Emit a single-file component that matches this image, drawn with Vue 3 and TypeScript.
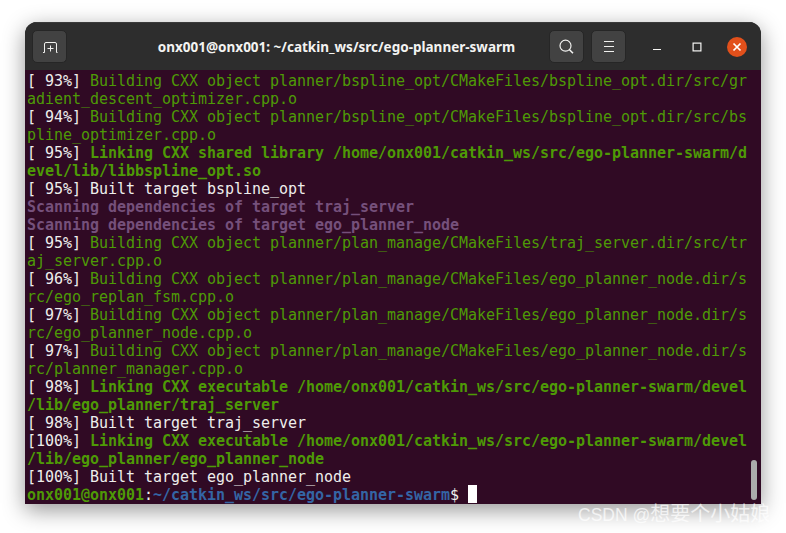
<script setup lang="ts">
type Seg = { t: string; c: string };
const W = 'w', G = 'g', B = 'gb', P = 'p', U = 'u';
const prefix = (p: string, rest: string, c: string): Seg[] => [{ t: p + ' ', c: W }, { t: rest, c }];
const lines: Seg[][] = [
  prefix('[ 93%]', 'Building CXX object planner/bspline_opt/CMakeFiles/bspline_opt.dir/src/gr', G),
  [{ t: 'adient_descent_optimizer.cpp.o', c: G }],
  prefix('[ 94%]', 'Building CXX object planner/bspline_opt/CMakeFiles/bspline_opt.dir/src/bs', G),
  [{ t: 'pline_optimizer.cpp.o', c: G }],
  prefix('[ 95%]', 'Linking CXX shared library /home/onx001/catkin_ws/src/ego-planner-swarm/d', B),
  [{ t: 'evel/lib/libbspline_opt.so', c: B }],
  [{ t: '[ 95%] Built target bspline_opt', c: W }],
  [{ t: 'Scanning dependencies of target traj_server', c: P }],
  [{ t: 'Scanning dependencies of target ego_planner_node', c: P }],
  prefix('[ 95%]', 'Building CXX object planner/plan_manage/CMakeFiles/traj_server.dir/src/tr', G),
  [{ t: 'aj_server.cpp.o', c: G }],
  prefix('[ 96%]', 'Building CXX object planner/plan_manage/CMakeFiles/ego_planner_node.dir/s', G),
  [{ t: 'rc/ego_replan_fsm.cpp.o', c: G }],
  prefix('[ 97%]', 'Building CXX object planner/plan_manage/CMakeFiles/ego_planner_node.dir/s', G),
  [{ t: 'rc/ego_planner_node.cpp.o', c: G }],
  prefix('[ 97%]', 'Building CXX object planner/plan_manage/CMakeFiles/ego_planner_node.dir/s', G),
  [{ t: 'rc/planner_manager.cpp.o', c: G }],
  prefix('[ 98%]', 'Linking CXX executable /home/onx001/catkin_ws/src/ego-planner-swarm/devel', B),
  [{ t: '/lib/ego_planner/traj_server', c: B }],
  [{ t: '[ 98%] Built target traj_server', c: W }],
  prefix('[100%]', 'Linking CXX executable /home/onx001/catkin_ws/src/ego-planner-swarm/devel', B),
  [{ t: '/lib/ego_planner/ego_planner_node', c: B }],
  [{ t: '[100%] Built target ego_planner_node', c: W }],
];
const prompt: Seg[] = [
  { t: 'onx001@onx001', c: B },
  { t: ':', c: W },
  { t: '~/catkin_ws/src/ego-planner-swarm', c: U },
  { t: '$ ', c: W },
];
</script>

<template>
  <div class="page">
    <div class="window">
      <header class="bar">
        <button class="btn">
          <svg width="16" height="16" viewBox="0 0 16 16" fill="none" stroke="#f0f0ee" stroke-width="1">
            <path d="M1 13.500h1.500V5a1.500 1.500 0 0 1 1.500-1.500h9a1.500 1.500 0 0 1 1.500 1.500v8.500h1" />
            <path d="M8.500 6.500v6M5.500 9.500h6" />
          </svg>
        </button>
        <div class="title">onx001@onx001: ~/catkin_ws/src/ego-planner-swarm</div>
        <div class="tools">
          <button class="btn">
            <svg width="16" height="16" viewBox="0 0 16 16" fill="none" stroke="#f0f0ee" stroke-width="1.200">
              <circle cx="6.500" cy="6.700" r="5.500" />
              <path d="M10.500 10.800l3.500 3.400" stroke-width="1.600" />
            </svg>
          </button>
          <button class="btn">
            <svg width="16" height="16" viewBox="0 0 16 16" fill="none" stroke="#f0f0ee" stroke-width="1">
              <path d="M3 2.500h10M3 7.500h10M3 12.500h10" />
            </svg>
          </button>
        </div>
        <div class="controls">
          <span class="ctl">
            <svg width="12" height="12" viewBox="0 0 12 12" fill="none" stroke="#f6f6f4" stroke-width="1"><path d="M2 8.500h8" /></svg>
          </span>
          <span class="ctl">
            <svg width="12" height="12" viewBox="0 0 12 12" fill="none" stroke="#f6f6f4" stroke-width="1.200"><rect x="2.100" y="2.100" width="7.800" height="7.800" /></svg>
          </span>
          <span class="ctl close">
            <svg width="10" height="10" viewBox="0 0 10 10" fill="none" stroke="#fff" stroke-width="1.700"><path d="M1.500 1.500l7 7M8.500 1.500l-7 7" /></svg>
          </span>
        </div>
      </header>
      <main class="term">
        <div v-for="(l, i) in lines" :key="i" class="line"><span v-for="(s, j) in l" :key="j" :class="s.c">{{ s.t }}</span></div>
        <div class="line"><span v-for="(s, j) in prompt" :key="j" :class="s.c">{{ s.t }}</span><span class="cursor"></span></div>
        <div class="thumb"></div>
      </main>
    </div>
    <div class="mark">CSDN @<span class="cjk">想要个小姑娘</span></div>
  </div>
</template>

<style>
html, body { margin: 0; background: #fff; overflow: hidden; }
</style>

<style scoped>
.page {
  position: relative;
  width: 786px;
  height: 533px;
  box-sizing: border-box;
  padding: 22px 25px 29px;
  background: #fff;
  overflow: hidden;
}
.window {
  height: 482px;
  display: flex;
  flex-direction: column;
  border-radius: 12px 12px 0 0;
  overflow: hidden;
  box-shadow: 0 6px 22px rgba(0, 0, 0, 0.42);
  background: #2d2d2d;
}
.bar {
  height: 48px;
  flex: none;
  display: flex;
  align-items: center;
  padding: 0 4px 0 8px;
  background: #2d2d2d;
  border-top: 1px solid #3a3a3a;
  box-sizing: border-box;
}
.btn {
  width: 35px;
  height: 33px;
  margin-left: -1px;
  padding: 0;
  display: flex;
  align-items: center;
  justify-content: center;
  background: #424242;
  border: 1px solid #262626;
  border-radius: 5px;
  box-sizing: border-box;
}
.title {
  flex: 1;
  text-align: center;
  color: #f3f3f1;
  font: 700 13.500px "Noto Sans", sans-serif;
  white-space: nowrap;
  padding-left: 61px;
}
.tools { display: flex; gap: 8px; margin-left: 5px; }
.controls { display: flex; align-items: center; gap: 20px; margin-left: 21px; margin-right: 10px; }
.ctl { width: 20px; height: 20px; display: flex; align-items: center; justify-content: center; }
.close { background: #e2501b; border-radius: 50%; }
.term {
  position: relative;
  flex: 1;
  background: #300a24;
  padding: 1px 0 0 2px;
  font-family: "DejaVu Sans Mono", monospace;
  font-size: 15px;
  overflow: hidden;
}
.line { height: 18px; line-height: 20px; white-space: pre; letter-spacing: -0.03px; }
.w { color: #eeeeec; }
.g { color: #4e9a06; }
.gb { color: #4e9a06; font-weight: 700; }
.p { color: #75507b; font-weight: 700; }
.u { color: #3465a4; font-weight: 700; }
.cursor {
  display: inline-block;
  width: 9px;
  height: 18px;
  background: #fff;
  vertical-align: top;
}
.thumb {
  position: absolute;
  right: 4px;
  bottom: 4px;
  width: 6px;
  height: 40px;
  border-radius: 3px;
  background: #ababab;
}
.mark {
  position: absolute;
  left: 578px;
  top: 502px;
  color: rgba(255, 255, 255, 0.72);
  font: 17.500px/24px "Liberation Sans", "Noto Sans CJK SC", sans-serif;
  white-space: nowrap;
}
.cjk { font-size: 20px; }
</style>
